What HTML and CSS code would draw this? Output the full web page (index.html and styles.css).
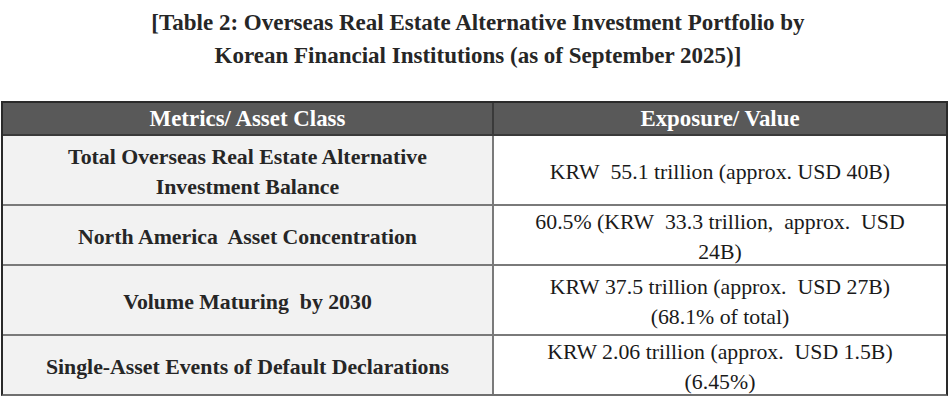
FILE: index.html
```html
<!DOCTYPE html>
<html lang="en">
<head>
<meta charset="utf-8">
<title>Table 2</title>
<link rel="stylesheet" href="styles.css">
</head>
<body>
<h1 class="title">[Table 2: Overseas Real Estate Alternative Investment Portfolio by<br>Korean Financial Institutions (as of September 2025)]</h1>
<div class="table">
  <div class="cell head left">Metrics/ Asset Class</div>
  <div class="cell head right">Exposure/ Value</div>

  <div class="cell key">Total Overseas Real Estate Alternative<br>Investment Balance</div>
  <div class="cell val">KRW&nbsp; 55.1 trillion (approx. USD 40B)</div>

  <div class="cell key">North America&nbsp; Asset Concentration</div>
  <div class="cell val">60.5% (KRW&nbsp; 33.3 trillion,&nbsp; approx.&nbsp; USD<br>24B)</div>

  <div class="cell key">Volume Maturing&nbsp; by 2030</div>
  <div class="cell val">KRW&nbsp;37.5 trillion (approx.&nbsp; USD 27B)<br>(68.1% of total)</div>

  <div class="cell key last">Single-Asset Events of Default Declarations</div>
  <div class="cell val last">KRW 2.06 trillion (approx.&nbsp; USD 1.5B)<br>(6.45%)</div>
</div>
</body>
</html>
```
FILE: styles.css
```css
html, body {
  margin: 0;
  padding: 0;
  background: #ffffff;
}

body {
  font-family: "Liberation Serif", serif;
  color: #262626;
}

.title {
  margin: 0;
  padding: 6px 0 0 4px;
  font-family: "Liberation Serif", serif;
  font-size: 23px;
  line-height: 33px;
  font-weight: bold;
  text-align: center;
  color: #262626;
}

.table {
  margin: 29px 0 0 1px;
  width: 947px;
  box-sizing: border-box;
  display: grid;
  grid-template-columns: 491px 452px;
  grid-template-rows: 33px 70px 60px 70px 58px;
  border: 2px solid #2a2a2a;
  border-bottom-color: #6f6f6f;
}

.cell {
  box-sizing: border-box;
  display: flex;
  align-items: center;
  justify-content: center;
  padding-top: 3px;
  text-align: center;
  font-family: "Liberation Serif", serif;
  font-size: 21.8px;
  line-height: 30px;
  border-bottom: 2px solid #7a7a7a;
  overflow: visible;
  white-space: nowrap;
}

.cell.last {
  border-bottom: none;
}

.head {
  padding-top: 1px;
  background: #595959;
  color: #ffffff;
  font-weight: bold;
  font-size: 22.9px;
  border-bottom-color: #3a3a3a;
}

.head.left {
  border-right: 2px solid #3a3a3a;
}

.key {
  background: #f2f2f2;
  color: #262626;
  font-weight: bold;
  border-right: 2px solid #7a7a7a;
}

.val {
  background: #ffffff;
  color: #1a1a1a;
}
```
